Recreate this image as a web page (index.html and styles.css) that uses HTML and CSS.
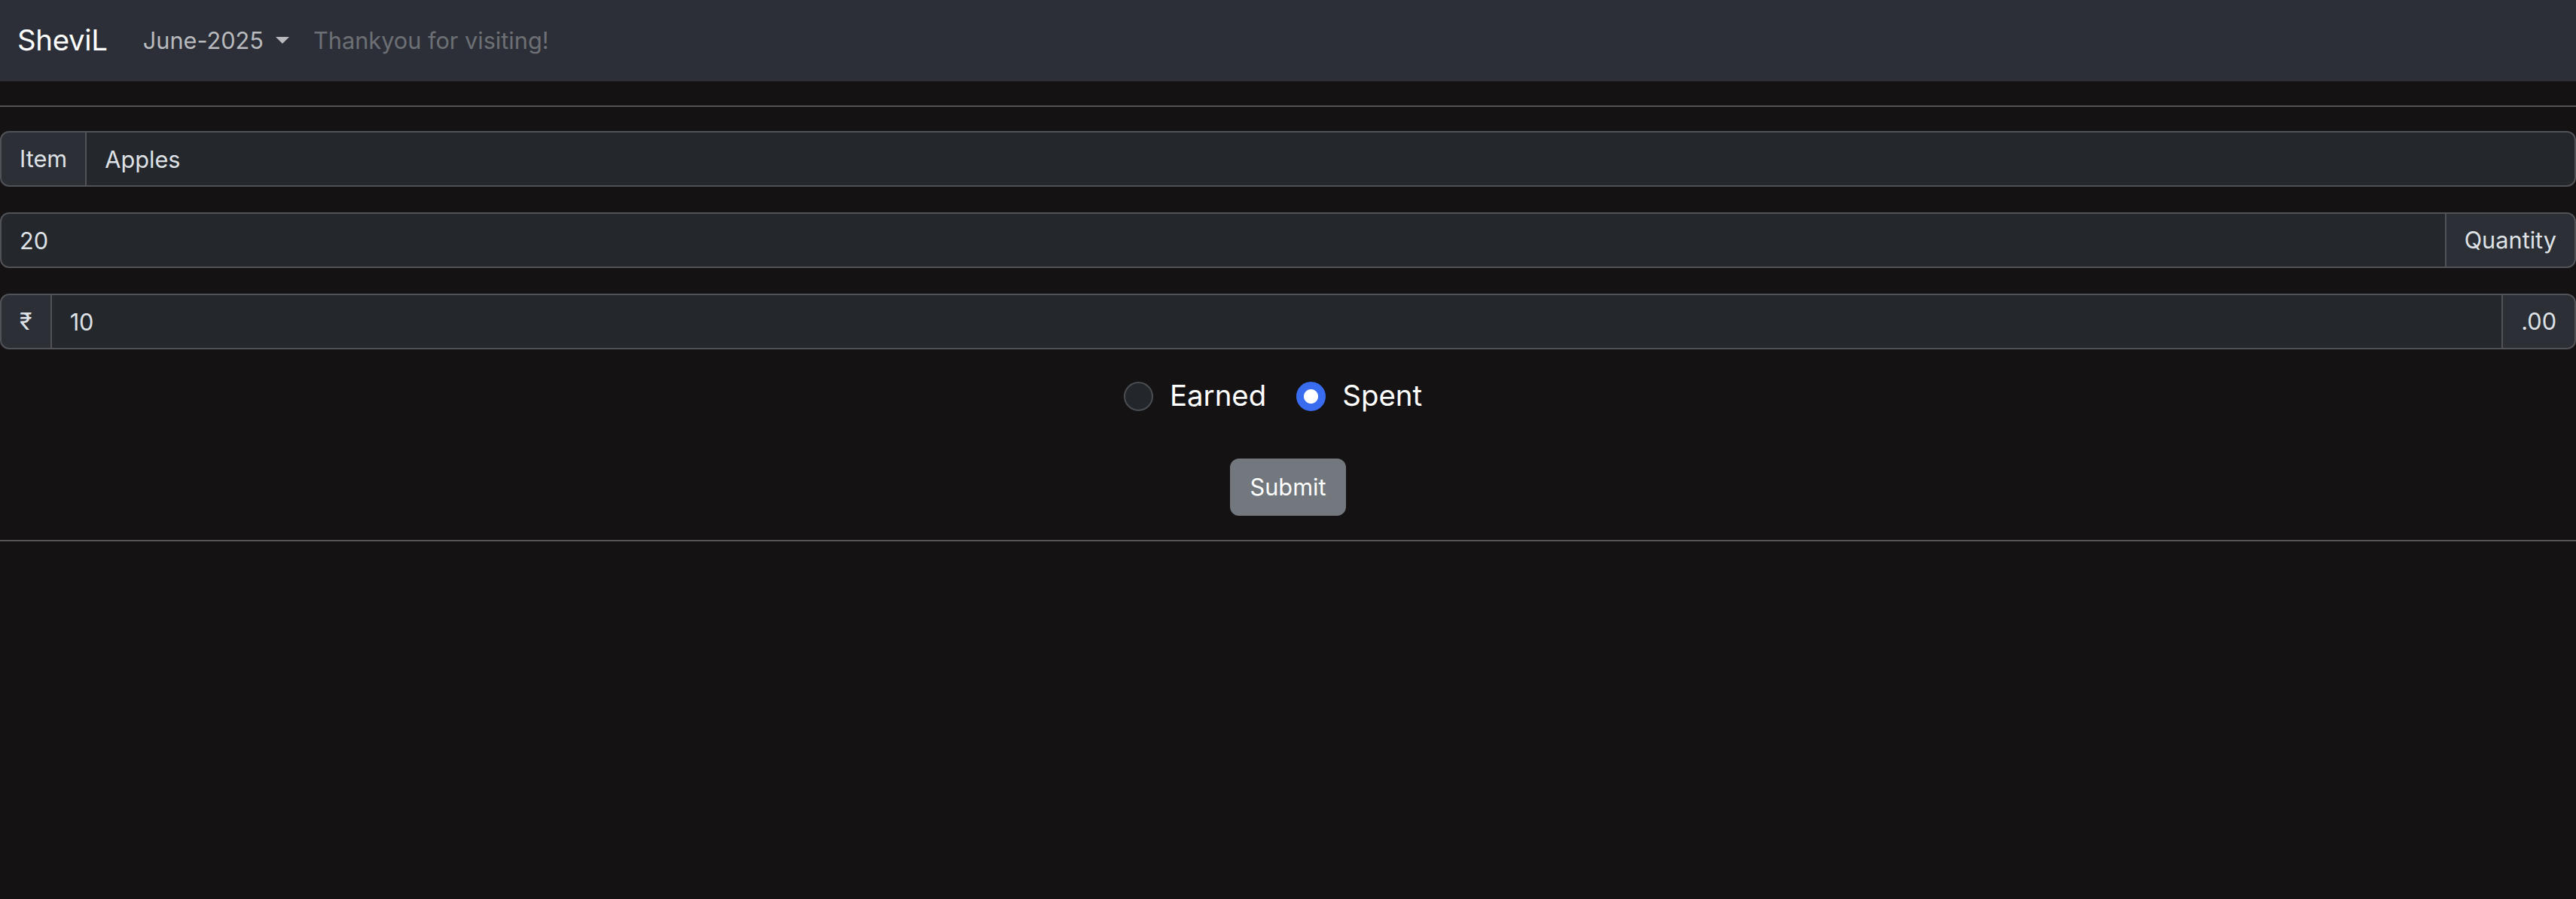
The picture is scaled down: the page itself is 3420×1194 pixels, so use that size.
FILE: index.html
```html
<!DOCTYPE html>
<html lang="en">
<head>
<meta charset="utf-8">
<title>SheviL</title>
<link rel="stylesheet" href="styles.css">
</head>
<body>
<nav class="navbar">
  <a class="brand" href="#">SheviL</a>
  <div class="nav-item">
    <a class="nav-link" href="#">June-2025<span class="caret"></span></a>
  </div>
  <span class="navbar-text">Thankyou for visiting!</span>
</nav>
<main class="page">
  <hr class="rule">
  <form class="entry">
    <div class="input-group">
      <span class="addon addon-left">Item</span>
      <input class="field" type="text" value="Apples">
    </div>
    <div class="input-group">
      <input class="field field-left" type="text" value="20">
      <span class="addon addon-right">Quantity</span>
    </div>
    <div class="input-group">
      <span class="addon addon-left">₹</span>
      <input class="field field-mid" type="text" value="10">
      <span class="addon addon-right">.00</span>
    </div>
    <div class="radios">
      <label class="check"><input class="radio" type="radio" name="kind"><span>Earned</span></label>
      <label class="check"><input class="radio" type="radio" name="kind" checked><span>Spent</span></label>
    </div>
    <div class="actions">
      <button class="btn" type="button">Submit</button>
    </div>
  </form>
  <hr class="rule">
</main>
</body>
</html>
```
FILE: styles.css
```css
* { box-sizing: border-box; }
html, body {
  margin: 0;
  padding: 0;
  background: #141213;
  color: #dee2e6;
  font-family: Inter, "Noto Sans", "Liberation Sans", sans-serif;
  font-size: 30.7px;
  line-height: 1.5;
}
.navbar {
  height: 108px;
  background: #2c2f37;
  display: flex;
  align-items: center;
  padding: 0 23px;
}
.brand {
  color: #ffffff;
  text-decoration: none;
  font-size: 38.4px;
  margin-right: 31px;
  letter-spacing: -0.3px;
}
.nav-link {
  color: #b8babd;
  text-decoration: none;
  display: flex;
  align-items: center;
  padding: 0 16px;
}
.caret {
  display: inline-block;
  width: 0;
  height: 0;
  margin-left: 16px;
  border-top: 9px solid #b8babd;
  border-left: 9px solid transparent;
  border-right: 9px solid transparent;
}
.navbar-text {
  color: #6c7075;
  margin-left: 16px;
}
.page { display: block; }
.rule {
  margin: 32px 0;
  border: 0;
  border-top: 2px solid #555556;
  height: 0;
}
.entry {
  display: flex;
  flex-direction: column;
}
.input-group {
  display: flex;
  height: 74px;
  margin-bottom: 34px;
}
.addon, .field {
  font-family: inherit;
  font-size: 30.7px;
  color: #dee2e6;
  border: 2px solid #505257;
  padding: 0 24px;
  display: flex;
  align-items: center;
  height: 74px;
}
.addon {
  background: #2c2f35;
  white-space: nowrap;
}
.addon-left {
  border-radius: 12px 0 0 12px;
  border-right-width: 2px;
}
.addon-right {
  border-radius: 0 12px 12px 0;
  border-left: 0;
}
.field {
  flex: 1;
  min-width: 0;
  background: #24272c;
  border-left: 0;
  border-radius: 0 12px 12px 0;
  outline: none;
}
.field-left {
  border-left: 2px solid #505257;
  border-radius: 12px 0 0 12px;
}
.field-mid {
  border-radius: 0;
  border-right-width: 2px;
}
.radios {
  display: flex;
  justify-content: center;
  font-size: 38.4px;
  color: #ffffff;
  height: 58px;
  margin-top: -1px;
}
.check {
  display: flex;
  align-items: center;
  margin-right: 40px;
}
.radio {
  appearance: none;
  -webkit-appearance: none;
  margin: 0 22px 0 0;
  width: 39px;
  height: 39px;
  border-radius: 50%;
  border: 2px solid #4a4e53;
  background: #23262b;
}
.radio:checked {
  border-color: #3a6cf0;
  background: radial-gradient(circle, #ffffff 0 9px, #3a6cf0 10px);
}
.actions {
  display: flex;
  justify-content: center;
  margin-top: 54px;
}
.btn {
  font-family: inherit;
  font-size: 30.7px;
  line-height: 1.5;
  color: #ffffff;
  background: #72787e;
  border: 2px solid #72787e;
  border-radius: 12px;
  padding: 13px 25px;
  height: 76px;
}
```
